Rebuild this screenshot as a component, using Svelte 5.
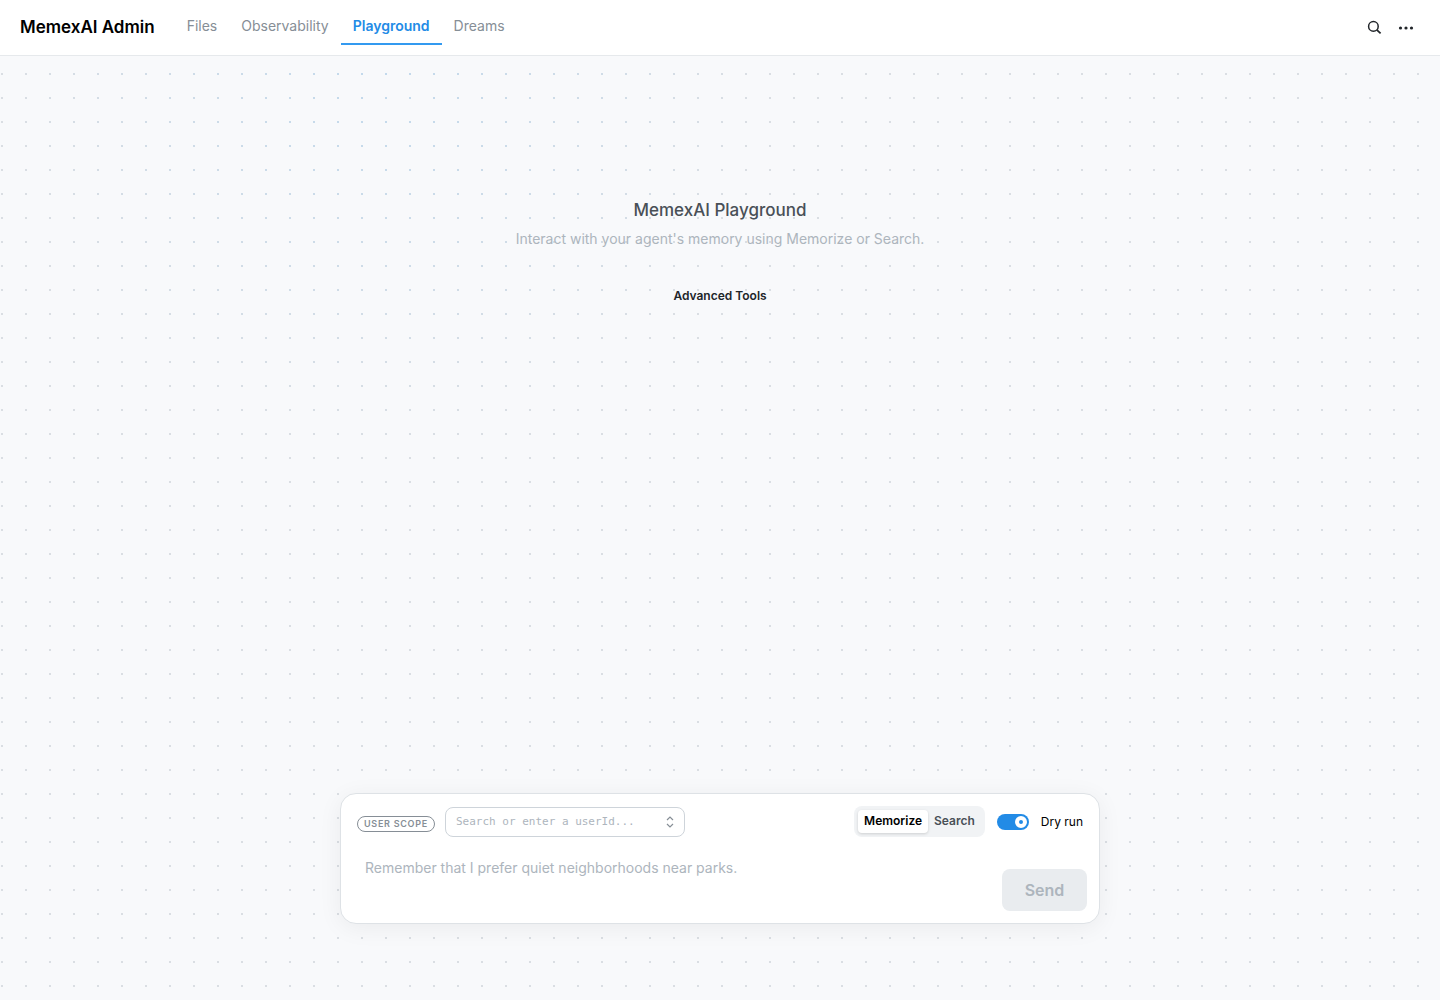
<script>
  const tabs = ['Files', 'Observability', 'Playground', 'Dreams'];
  const modes = ['Memorize', 'Search'];

  let activeTab = $state('Playground');
  let mode = $state('Memorize');
  let dryRun = $state(true);
  let userId = $state('');
  let message = $state('');
</script>

<div class="app">
  <header>
    <h1>MemexAI Admin</h1>
    <nav>
      {#each tabs as tab}
        <a
          href="#{tab.toLowerCase()}"
          class:active={tab === activeTab}
          onclick={() => (activeTab = tab)}>{tab}</a>
      {/each}
    </nav>
    <div class="actions">
      <button class="icon" aria-label="Search">
        <svg width="16" height="16" viewBox="0 0 16 16" fill="none" stroke="currentColor">
          <circle cx="7.4" cy="7.4" r="4.8" stroke-width="1.5" />
          <path d="M10.8 10.8 14.6 14.4" stroke-width="1.7" />
        </svg>
      </button>
      <button class="icon" aria-label="More">
        <svg width="16" height="16" viewBox="0 0 16 16" fill="currentColor">
          <circle cx="2.5" cy="9" r="1.6" />
          <circle cx="8" cy="9" r="1.6" />
          <circle cx="13.5" cy="9" r="1.6" />
        </svg>
      </button>
    </div>
  </header>

  <main>
    <section class="intro">
      <h2>MemexAI Playground</h2>
      <p>Interact with your agent's memory using Memorize or Search.</p>
      <button class="advanced">Advanced Tools</button>
    </section>

    <form class="composer" onsubmit={e => e.preventDefault()}>
      <div class="toolbar">
        <label class="badge" for="user-id">USER SCOPE</label>
        <div class="combo">
          <input id="user-id" type="text" placeholder="Search or enter a userId..." bind:value={userId} />
          <svg width="16" height="16" viewBox="0 0 16 16" fill="none" stroke="currentColor">
            <path d="M5 6 8 3l3 3M5 10l3 3 3-3" stroke-width="1.2" />
          </svg>
        </div>
        <div class="modes">
          {#each modes as item}
            <label class:selected={item === mode}>
              <input type="radio" name="mode" value={item} bind:group={mode} />
              {item}
            </label>
          {/each}
        </div>
        <label class="switch">
          <input type="checkbox" role="switch" bind:checked={dryRun} />
          <span class="track"><span class="thumb"></span></span>
          Dry run
        </label>
      </div>
      <div class="entry">
        <textarea
          aria-label="Message"
          placeholder="Remember that I prefer quiet neighborhoods near parks."
          bind:value={message}></textarea>
        <button class="send" disabled={!message}>Send</button>
      </div>
    </form>
  </main>
</div>

<style>
  :global(body) {
    margin: 0;
  }

  .app {
    display: flex;
    flex-direction: column;
    min-height: 100vh;
    background: #f8f9fb;
    color: #000;
    font-family: Inter, sans-serif;
    font-size: 14px;
  }

  button,
  input,
  textarea {
    font-family: inherit;
    margin: 0;
    padding: 0;
    border: none;
    outline: none;
    background: none;
  }

  header {
    display: flex;
    align-items: center;
    height: 54px;
    padding: 0 20px 1px;
    border-bottom: 1px solid #e6e9ec;
    background: #fff;
  }

  h1 {
    margin: 0 20px 0 0;
    font-size: 17px;
    font-weight: 600;
    line-height: 28px;
  }

  nav {
    display: flex;
  }
  nav a {
    padding: 7px 12px;
    border-bottom: 2px solid transparent;
    color: #868e96;
    line-height: 20px;
    text-decoration: none;
  }
  nav a.active {
    border-color: #339af0;
    color: #228be6;
    font-weight: 600;
  }

  .actions {
    display: flex;
    gap: 4px;
    margin-left: auto;
  }
  .icon {
    display: flex;
    align-items: center;
    justify-content: center;
    width: 28px;
    height: 28px;
    color: #212529;
  }

  main {
    position: relative;
    flex: 1;
    display: flex;
    flex-direction: column;
    align-items: center;
    justify-content: space-between;
    padding: 140px 20px 76px;
  }
  /* dot grid, tinted blue around the glow */
  main::before {
    content: "";
    position: absolute;
    inset: 0;
    background: radial-gradient(circle at 380px 20px, #c2d9ec, #dadee3 380px);
    mask: radial-gradient(circle, #000 1px, transparent 1px) -10px 6px / 24px 24px;
  }

  .intro {
    position: relative;
    display: flex;
    flex-direction: column;
    align-items: center;
    text-align: center;
  }
  h2 {
    margin: 0;
    color: #495057;
    font-size: 17px;
    font-weight: 500;
    line-height: 28px;
  }
  .intro p {
    margin: 4px 0 36px;
    color: #adb5bd;
    line-height: 22px;
  }
  .advanced {
    color: #212529;
    font-size: 12px;
    font-weight: 600;
    line-height: 20px;
  }

  .composer {
    position: relative;
    box-sizing: border-box;
    width: 100%;
    max-width: 760px;
    padding: 12px;
    border: 1px solid #dee2e6;
    border-radius: 16px;
    background: #fff;
    box-shadow: 0 4px 24px rgba(0, 0, 0, 0.06);
  }

  .toolbar {
    display: flex;
    align-items: center;
    padding: 0 4px;
  }
  .badge {
    margin: 4px 10px 0 0;
    padding: 0 6px;
    border: 1px solid #868e96;
    border-radius: 16px;
    color: #868e96;
    font-size: 9px;
    font-weight: 600;
    letter-spacing: 0.08em;
    line-height: 14px;
  }
  .combo {
    box-sizing: border-box;
    display: flex;
    align-items: center;
    width: 240px;
    height: 30px;
    padding: 0 6px 0 10px;
    border: 1px solid #ced4da;
    border-radius: 8px;
    color: #868e96;
  }
  .combo input {
    flex: 1;
    min-width: 0;
    font-family: "DejaVu Sans Mono", monospace;
    font-size: 11px;
  }
  ::placeholder {
    color: #adb5bd;
    opacity: 1;
  }

  .modes {
    display: flex;
    margin-left: auto;
    padding: 4px;
    border-radius: 8px;
    background: #f1f3f5;
  }
  .modes label {
    padding: 0 6px 1px;
    border-radius: 4px;
    color: #495057;
    font-size: 12px;
    font-weight: 600;
    line-height: 22px;
  }
  .modes label.selected {
    background: #fff;
    color: #000;
    box-shadow: 0 1px 3px rgba(0, 0, 0, 0.15);
  }
  .modes input,
  .switch input {
    position: absolute;
    opacity: 0;
  }

  .switch {
    display: flex;
    align-items: center;
    margin-left: 12px;
    font-size: 12px;
    line-height: 16px;
  }
  .track {
    box-sizing: border-box;
    display: flex;
    width: 32px;
    height: 16px;
    margin-right: 12px;
    padding: 2px;
    border-radius: 8px;
    background: #ced4da;
  }
  .thumb {
    box-sizing: border-box;
    width: 12px;
    height: 12px;
    border: 4px solid #fff;
    border-radius: 50%;
    background: #ced4da;
  }
  .switch input:checked + .track {
    justify-content: flex-end;
    background: #228be6;
  }
  .switch input:checked + .track .thumb {
    background: #228be6;
  }

  .entry {
    display: flex;
    align-items: flex-end;
    gap: 12px;
    margin-top: 12px;
  }
  textarea {
    box-sizing: border-box;
    flex: 1;
    height: 62px;
    padding: 8px 12px;
    resize: none;
    font-size: 14px;
    line-height: 22px;
  }
  .send {
    width: 85px;
    height: 42px;
    border-radius: 8px;
    background: #228be6;
    color: #fff;
    font-size: 16px;
    font-weight: 600;
  }
  .send:disabled {
    background: #e9ecef;
    color: #adb5bd;
  }
</style>
